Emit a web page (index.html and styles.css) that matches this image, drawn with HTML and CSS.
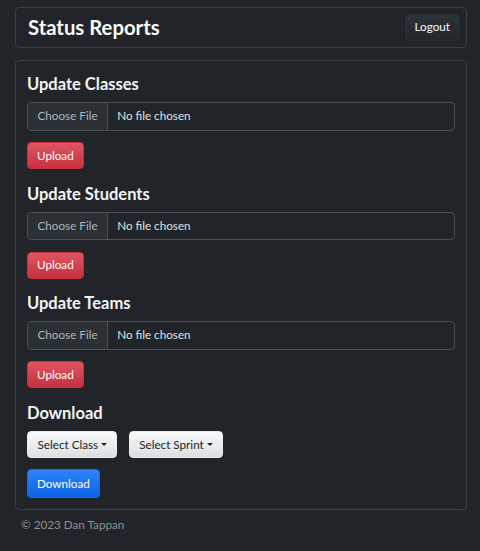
FILE: index.html
```
<!DOCTYPE html>
<html lang="en">
<head>
<meta charset="utf-8">
<title>Status Reports</title>
<link rel="stylesheet" href="styles.css">
</head>
<body>
<div class="container">
  <header class="card header">
    <h1 class="title">Status Reports</h1>
    <button class="btn btn-dark">Logout</button>
  </header>
  <main class="card main">
    <section class="section">
      <h2 class="heading">Update Classes</h2>
      <div class="file-input"><span class="file-btn">Choose File</span><span class="file-name">No file chosen</span></div>
      <button class="btn btn-danger">Upload</button>
    </section>
    <section class="section">
      <h2 class="heading">Update Students</h2>
      <div class="file-input"><span class="file-btn">Choose File</span><span class="file-name">No file chosen</span></div>
      <button class="btn btn-danger">Upload</button>
    </section>
    <section class="section">
      <h2 class="heading">Update Teams</h2>
      <div class="file-input"><span class="file-btn">Choose File</span><span class="file-name">No file chosen</span></div>
      <button class="btn btn-danger">Upload</button>
    </section>
    <section class="section last">
      <h2 class="heading">Download</h2>
      <div class="dropdowns">
        <button class="btn btn-light">Select Class<span class="caret"></span></button>
        <button class="btn btn-light">Select Sprint<span class="caret"></span></button>
      </div>
      <button class="btn btn-primary">Download</button>
    </section>
  </main>
  <footer class="footer">© 2023 Dan Tappan</footer>
</div>
</body>
</html>
```
FILE: styles.css
```
* { box-sizing: border-box; }
html, body { margin: 0; padding: 0; }
body {
  background: #212529;
  color: #dee2e6;
  font-family: "Lato", "Open Sans", sans-serif;
  font-size: 11.7px;
  line-height: 1.5;
}
.container {
  padding: 7px 13px 0 15px;
}
.card {
  border: 1px solid #3b4045;
  border-radius: 4px;
  background: #212529;
}
.header {
  height: 40.5px;
  display: flex;
  align-items: center;
  justify-content: space-between;
  padding: 0 6px 0 12px;
}
.title {
  margin: 0;
  font-size: 20.3px;
  font-weight: 700;
  color: #f8f9fa;
  line-height: 1.2;
}
.main {
  margin-top: 12.5px;
  padding: 13px 11px 11px 11px;
}
.section { margin-bottom: 14.5px; }
.section.last { margin-bottom: 0; }
.heading {
  margin: 0 0 6.5px 0;
  font-size: 16.5px;
  font-weight: 700;
  line-height: 21.5px;
  color: #f1f3f5;
}
.file-input {
  display: flex;
  height: 28.5px;
  border: 1px solid #495057;
  border-radius: 4px;
  overflow: hidden;
  margin-bottom: 11.5px;
  color: #dee2e6;
}
.file-btn {
  display: flex;
  align-items: center;
  padding: 0 9.5px;
  background: #2b3035;
  border-right: 1px solid #495057;
  color: #adb5bd;
}
.file-name {
  display: flex;
  align-items: center;
  padding: 0 9px;
}
.btn {
  font-family: inherit;
  font-size: 11.7px;
  line-height: 1.5;
  height: 27px;
  padding: 0 9px;
  border-radius: 4px;
  border: 1px solid transparent;
  cursor: pointer;
  display: inline-flex;
  align-items: center;
}
.btn-dark {
  background: linear-gradient(180deg, #2d3237, #23272b);
  color: #f8f9fa;
  box-shadow: 0 0 3px rgba(0,0,0,0.35);
  border-color: #2b3035;
}
.btn-danger {
  background: linear-gradient(180deg, #e15461, #c7303f);
  border-color: #c8303e;
  color: #fff;
}
.btn-light {
  background: linear-gradient(180deg, #f9fafb, #dcdfe1);
  border-color: #e9ecef;
  color: #212529;
  height: 27.7px;
  padding: 0 9px 0 9.5px;
}
.btn-primary {
  background: linear-gradient(180deg, #3081fd, #0b63e4);
  border-color: #0d6efd;
  color: #fff;
  height: 28.7px;
}
.dropdowns {
  display: flex;
  gap: 11.5px;
  margin-bottom: 11.3px;
}
.caret {
  display: inline-block;
  margin-left: 3px;
  border-top: 3.5px solid #212529;
  border-left: 3px solid transparent;
  border-right: 3px solid transparent;
  vertical-align: middle;
}
.footer {
  padding: 5.5px 6px;
  color: #8b9196;
  font-size: 11.7px;
}
```
